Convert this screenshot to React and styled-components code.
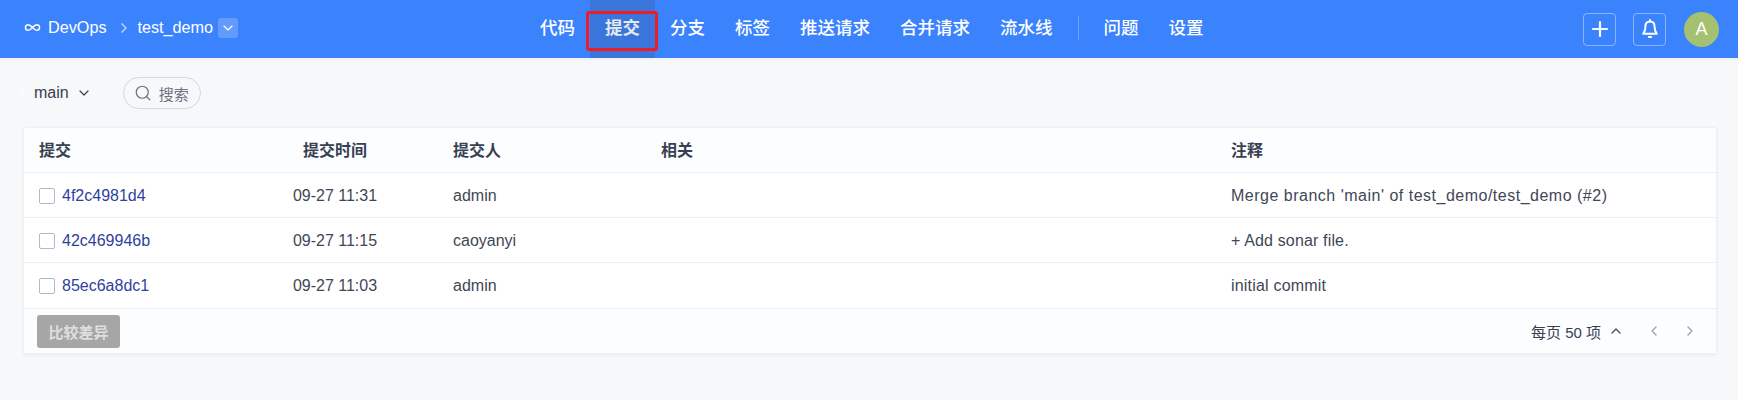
import React from 'react';
import styled, { createGlobalStyle } from 'styled-components';
import { ChevronDown, ChevronLeft, ChevronRight, ChevronUp, Search, Plus, Infinity as InfinityIcon } from 'lucide-react';

const GlobalStyle = createGlobalStyle`
  html, body {
    margin: 0;
    height: 400px;
    overflow: hidden;
    background: #f7f8fa;
    font-family: "Liberation Sans", "Noto Sans CJK SC", sans-serif;
    color: #374151;
  }
`;

const TopBar = styled.header`
  position: relative;
  height: 58px;
  background: #3b82fd;
  display: grid;
  grid-template-columns: 525px 1fr auto;
  color: #fff;
  box-shadow: 0 1px 3px rgba(0, 0, 0, 0.06);
`;

const Crumbs = styled.div`
  display: flex;
  align-items: center;
  padding-left: 24px;
  font-size: 16.2px;
`;

const CrumbLink = styled.span`
  margin-left: ${(p) => p.$gap}px;
  line-height: 1;
  margin-top: -4px;
`;

const CrumbSep = styled(ChevronRight)`
  margin-left: 10px;
  margin-right: 1px;
  color: #b4cffe;
  margin-top: -2px;
`;

const RepoToggle = styled.span`
  width: 20px;
  height: 20px;
  margin-left: 5px;
  margin-top: -3px;
  border-radius: 3px;
  background: rgba(255, 255, 255, 0.2);
  display: flex;
  align-items: center;
  justify-content: center;
`;

const Nav = styled.nav`
  display: flex;
  align-items: stretch;
`;

const NavItem = styled.a`
  display: flex;
  align-items: center;
  justify-content: center;
  padding: 0 15px 5px;
  font-size: 17.5px;
  box-sizing: border-box;
  color: ${(p) => (p.$active ? '#e6e9ee' : '#fff')};
  background: ${(p) => (p.$active ? '#3a75dc' : 'transparent')};
  font-weight: ${(p) => (p.$active ? 700 : 500)};
`;

const NavDivider = styled.span`
  width: 1px;
  height: 24px;
  align-self: center;
  margin: -2px 10px 0;
  background: rgba(255, 255, 255, 0.25);
`;

const Callout = styled.span`
  position: absolute;
  left: 586px;
  top: 11px;
  width: 72px;
  height: 40px;
  box-sizing: border-box;
  border: 3px solid #ee1c25;
  border-radius: 3px;
  pointer-events: none;
`;

const Tools = styled.div`
  display: flex;
  align-items: center;
  padding-right: 19px;
`;

const ToolButton = styled.span`
  width: 33px;
  height: 33px;
  box-sizing: border-box;
  margin-right: 17px;
  border: 1px solid rgba(255, 255, 255, 0.4);
  border-radius: 4px;
  display: flex;
  align-items: center;
  justify-content: center;
`;

const Avatar = styled.span`
  width: 35px;
  height: 35px;
  margin-left: 1px;
  border-radius: 50%;
  background: #a3c170;
  display: flex;
  align-items: center;
  justify-content: center;
  font-size: 18px;
`;

const Main = styled.main`
  padding: 19px 21px 0 23px;
`;

const FilterBar = styled.div`
  height: 32px;
  display: flex;
  align-items: center;
  margin-bottom: 18px;
`;

const CollapseHint = styled(ChevronRight)`
  margin-left: -8px;
  color: #fff;
`;

const BranchSelect = styled.div`
  display: flex;
  align-items: center;
  gap: 7px;
  margin-left: 5px;
  font-size: 16px;
  color: #374151;
`;

const SearchBox = styled.div`
  display: flex;
  align-items: center;
  gap: 7px;
  width: 78px;
  height: 32px;
  margin-left: 31px;
  padding-left: 10px;
  box-sizing: border-box;
  border: 1px solid #d5d8e2;
  border-radius: 16px;
  font-size: 15px;
  color: #6b7280;
`;

const Card = styled.section`
  background: #fff;
  border: 1px solid #eef0f3;
  border-radius: 3px;
  box-shadow: 0 1px 3px rgba(0, 0, 0, 0.06);
`;

const Row = styled.div`
  display: grid;
  grid-template-columns: 208px 206px 208px 570px 1fr;
  align-items: center;
  height: 45px;
  border-bottom: 1px solid #edeff2;
  box-sizing: border-box;
  font-size: 16px;
  background: ${(p) => (p.$head ? '#fcfdff' : '#fff')};

  &:nth-child(4) {
    height: 46px;
  }
`;

const Cell = styled.div`
  padding: ${(p) => (p.$head ? '0 15px 2px' : '1px 15px 0')};
  display: flex;
  align-items: center;
  justify-content: ${(p) => (p.$center ? 'center' : 'flex-start')};
  font-weight: ${(p) => (p.$head ? 700 : 400)};
  color: ${(p) => (p.$head ? '#374151' : '#3f4756')};
  letter-spacing: ${(p) => p.$track || 0}px;
`;

const Check = styled.span`
  width: 14px;
  height: 14px;
  margin-right: 7px;
  border: 1px solid #b4b7c4;
  border-radius: 2px;
  background: #fff;
`;

const CommitLink = styled.a`
  color: #2f3f9e;
`;

const Footer = styled.div`
  height: 44px;
  display: flex;
  align-items: center;
  justify-content: space-between;
  padding: 0 18px 0 13px;
  background: #fcfdff;
`;

const CompareButton = styled.button`
  width: 83px;
  height: 33px;
  border: 0;
  border-radius: 3px;
  background: #a6a6a6;
  color: #dedede;
  font: 700 15px "Liberation Sans", "Noto Sans CJK SC", sans-serif;
`;

const Pager = styled.div`
  display: flex;
  align-items: center;
  font-size: 15px;
  color: #374151;
`;

const PageArrow = styled.span`
  display: flex;
  margin-left: ${(p) => p.$gap}px;
  color: ${(p) => p.$color};
`;

const BellIcon = () => (
  <svg width="22" height="22" viewBox="0 0 22 22" fill="none" stroke="#fff" strokeWidth="2" strokeLinecap="round" strokeLinejoin="round">
    <path d="M11 3.6c-3 0-4.6 2.3-4.6 5.2 0 3.4-.9 5.5-2.2 7h13.6c-1.3-1.5-2.2-3.6-2.2-7 0-2.9-1.6-5.2-4.6-5.2z" />
    <path d="M11 2v1.4" />
    <path d="M9.8 18.9h2.4" />
  </svg>
);

const navItems = ['代码', '提交', '分支', '标签', '推送请求', '合并请求', '流水线'];

const commits = [
  { sha: '4f2c4981d4', time: '09-27 11:31', author: 'admin', note: "Merge branch 'main' of test_demo/test_demo (#2)", track: 0.5 },
  { sha: '42c469946b', time: '09-27 11:15', author: 'caoyanyi', note: '+ Add sonar file.', track: 0.15 },
  { sha: '85ec6a8dc1', time: '09-27 11:03', author: 'admin', note: 'initial commit', track: 0.2 },
];

export default function App() {
  return (
    <>
      <GlobalStyle />
      <TopBar>
        <Crumbs>
          <InfinityIcon size={17} strokeWidth={2} style={{ marginTop: -3 }} />
          <CrumbLink $gap={7}>DevOps</CrumbLink>
          <CrumbSep size={16} strokeWidth={2.5} />
          <CrumbLink $gap={4}>test_demo</CrumbLink>
          <RepoToggle><ChevronDown size={16} strokeWidth={1.75} /></RepoToggle>
        </Crumbs>
        <Nav>
          {navItems.map((item) => (
            <NavItem key={item} $active={item === '提交'}>{item}</NavItem>
          ))}
          <NavDivider />
          <NavItem>问题</NavItem>
          <NavItem>设置</NavItem>
        </Nav>
        <Callout />
        <Tools>
          <ToolButton><Plus size={24} strokeWidth={2.2} /></ToolButton>
          <ToolButton><BellIcon /></ToolButton>
          <Avatar>A</Avatar>
        </Tools>
      </TopBar>
      <Main>
        <FilterBar>
          <CollapseHint size={14} strokeWidth={2} />
          <BranchSelect>main <ChevronDown size={16} strokeWidth={1.8} /></BranchSelect>
          <SearchBox><Search size={18} strokeWidth={1.6} />搜索</SearchBox>
        </FilterBar>
        <Card>
          <Row $head>
            <Cell $head>提交</Cell>
            <Cell $head $center>提交时间</Cell>
            <Cell $head>提交人</Cell>
            <Cell $head>相关</Cell>
            <Cell $head>注释</Cell>
          </Row>
          {commits.map((c) => (
            <Row key={c.sha}>
              <Cell><Check /><CommitLink>{c.sha}</CommitLink></Cell>
              <Cell $center>{c.time}</Cell>
              <Cell>{c.author}</Cell>
              <Cell />
              <Cell $track={c.track}>{c.note}</Cell>
            </Row>
          ))}
          <Footer>
            <CompareButton>比较差异</CompareButton>
            <Pager>
              每页 50 项
              <PageArrow $gap={7} $color="#4b5563"><ChevronUp size={16} /></PageArrow>
              <PageArrow $gap={22} $color="#9ca3af"><ChevronLeft size={16} /></PageArrow>
              <PageArrow $gap={20} $color="#9ca3af"><ChevronRight size={16} /></PageArrow>
            </Pager>
          </Footer>
        </Card>
      </Main>
    </>
  );
}
